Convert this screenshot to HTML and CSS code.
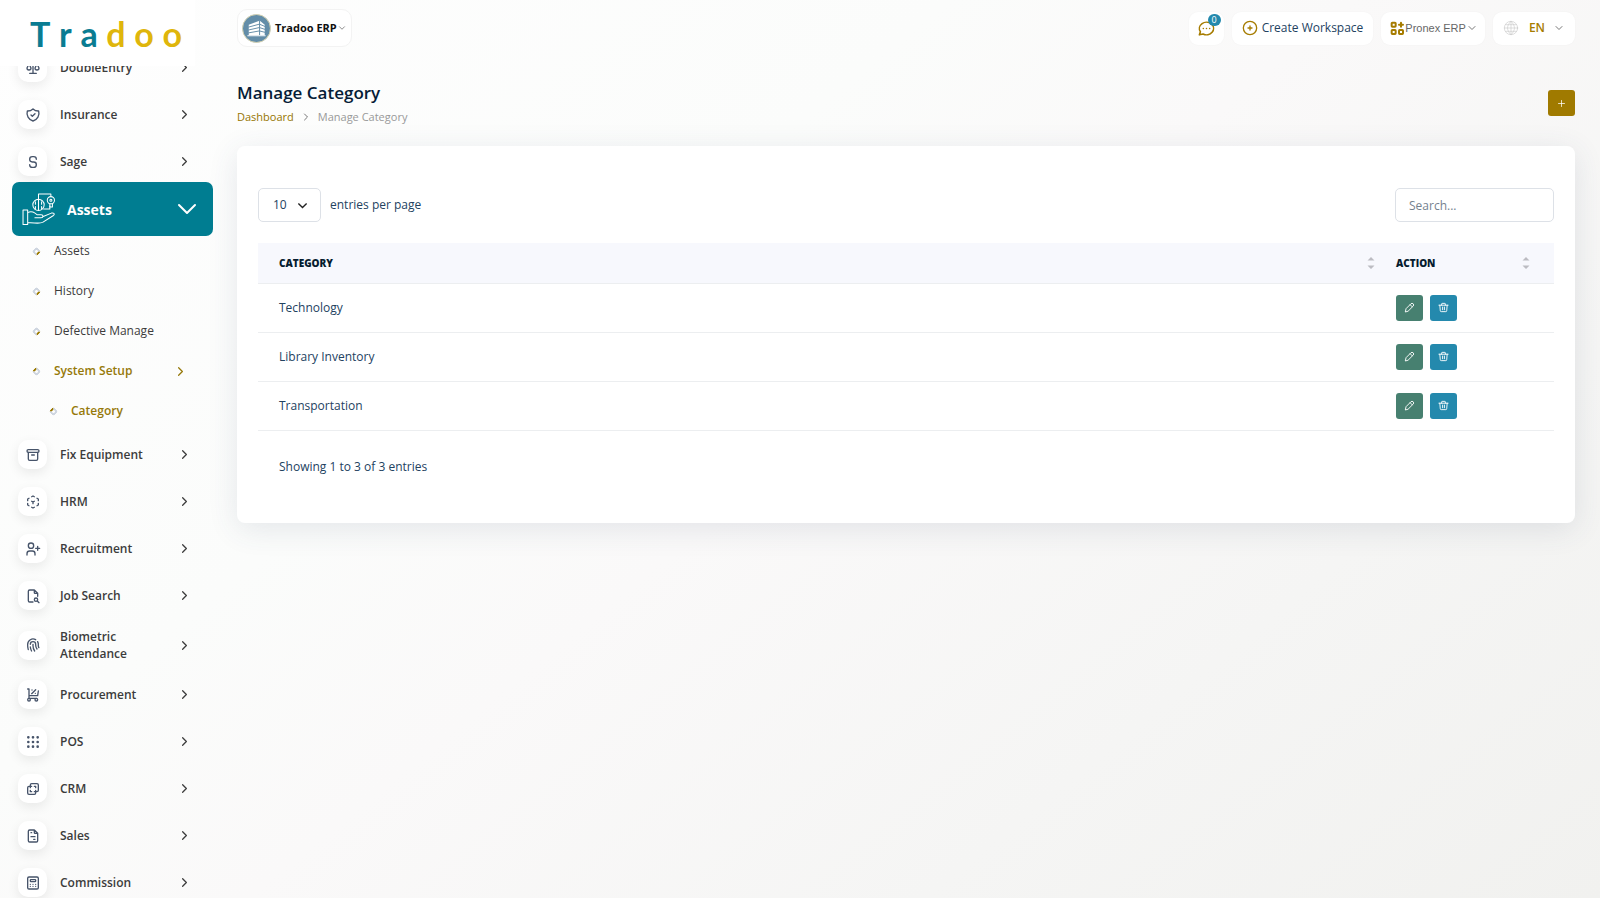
FILE: index.html
```html
<!DOCTYPE html>
<html lang="en">
<head>
<meta charset="utf-8">
<title>Manage Category</title>
<link rel="stylesheet" href="styles.css">
</head>
<body>
<svg class="sprite" aria-hidden="true">
  <symbol id="chev" viewBox="0 0 24 24"><path d="M9 6l6 6l-6 6"/></symbol>
  <symbol id="down" viewBox="0 0 24 24"><path d="M6 9l6 6l6-6"/></symbol>
  <symbol id="pencil" viewBox="0 0 24 24"><path d="M3 21l1.500-6.500L15 4a3.500 3.500 0 0 1 5 5L9.500 19.500zM13.500 6l4.500 4.500"/></symbol>
  <symbol id="trash" viewBox="0 0 24 24"><path d="M2 7h20M4 7l1 12a2 2 0 0 0 2 2h10a2 2 0 0 0 2-2l1-12M8 7V4a1 1 0 0 1 1-1h6a1 1 0 0 1 1 1v3M10 11v6M14 11v6"/></symbol>
  <symbol id="sort" viewBox="0 0 8 12"><path d="M4 0l3.500 3.500h-7zM4 12l3.500-3.500h-7z"/></symbol>
</svg>
<div class="app">
  <aside class="sidebar">
    <a class="logo" href="#" aria-label="Tradoo"><span>T</span><span>r</span><span>a</span><span class="gold">d</span><span class="gold">o</span><span class="gold">o</span></a>
    <nav class="nav">
      <div class="group scrolled">
        <a class="item" href="#"><span class="tile"><svg class="ico" viewBox="0 0 24 24"><path d="M7 20h10M6 6l6-1l6 1M12 3v17M9 12l-3-6l-3 6a3 3 0 0 0 6 0M21 12l-3-6l-3 6a3 3 0 0 0 6 0"/></svg></span><span class="label">DoubleEntry</span><svg class="chev"><use href="#chev"/></svg></a>
        <a class="item" href="#"><span class="tile"><svg class="ico" viewBox="0 0 24 24"><path d="M9 12l2 2l4-4M12 3a12 12 0 0 0 8.500 3a12 12 0 0 1-8.500 15a12 12 0 0 1-8.500-15a12 12 0 0 0 8.500-3"/></svg></span><span class="label">Insurance</span><svg class="chev"><use href="#chev"/></svg></a>
        <a class="item" href="#"><span class="tile"><svg class="ico" viewBox="0 0 24 24"><path d="M17 8a4 4 0 0 0-4-4h-2a4 4 0 0 0 0 8h2a4 4 0 0 1 0 8h-2a4 4 0 0 1-4-4"/></svg></span><span class="label">Sage</span><svg class="chev"><use href="#chev"/></svg></a>
      </div>
      <a class="active" href="#">
        <svg class="hand" viewBox="0 0 32 32"><path d="M1 16.500h4.500v14H1zM5.500 19c4-2 6.500 0 9 2h4c2.500 0 2.500 3 0 3h-6M20 23l8.500-3.500c2.500-.6 3.500 1 2 2.300L20 28.500c-3 1.500-9 .5-14.500 0"/><circle cx="16" cy="11.500" r="5.500"/><path d="M16 6v11M13 8.500v2.500M13 15v-2M19 8.500v2.500M19 15v-2M16 6V1h12v2M21 15.500h6v-3"/><circle cx="28" cy="7" r="3.500"/><circle cx="28" cy="7" r="1"/><path d="M27 10.500v3h2.500v-3"/></svg>
        <span class="label">Assets</span><svg class="open" viewBox="0 0 20 12"><path d="M2 2l8 8l8-8"/></svg>
      </a>
      <div class="sub">
        <a href="#"><i class="dot"></i>Assets</a>
        <a href="#"><i class="dot"></i>History</a>
        <a href="#"><i class="dot"></i>Defective Manage</a>
        <a class="on" href="#"><i class="dot"></i>System Setup<svg class="chev"><use href="#chev"/></svg></a>
        <a class="on deep" href="#"><i class="dot"></i>Category</a>
      </div>
      <div class="group">
        <a class="item" href="#"><span class="tile"><svg class="ico" viewBox="0 0 24 24"><rect x="3" y="4" width="18" height="4" rx="2"/><path d="M5 8v10a2 2 0 0 0 2 2h10a2 2 0 0 0 2-2V8M10 12h4"/></svg></span><span class="label">Fix Equipment</span><svg class="chev"><use href="#chev"/></svg></a>
        <a class="item" href="#"><span class="tile"><svg class="ico" viewBox="0 0 24 24"><path d="M6 17.600l-2-1.100V14M4 10V7.500l2-1.100M10 4.100L12 3l2 1.100M18 6.400l2 1.100V10M20 14v2.500l-2 1.120M14 19.900L12 21l-2-1.100M12 12l2-1.100M12 12v2.500M12 12l-2-1.120"/></svg></span><span class="label">HRM</span><svg class="chev"><use href="#chev"/></svg></a>
        <a class="item" href="#"><span class="tile"><svg class="ico" viewBox="0 0 24 24"><circle cx="9" cy="7" r="4"/><path d="M3 21v-2a4 4 0 0 1 4-4h4a4 4 0 0 1 4 4v2M16 11h6M19 8v6"/></svg></span><span class="label">Recruitment</span><svg class="chev"><use href="#chev"/></svg></a>
        <a class="item" href="#"><span class="tile"><svg class="ico" viewBox="0 0 24 24"><path d="M14 3v4a1 1 0 0 0 1 1h4M12 21H7a2 2 0 0 1-2-2V5a2 2 0 0 1 2-2h7l5 5v4.500M18.500 19.500L21 22"/><circle cx="16.500" cy="17.500" r="2.500"/></svg></span><span class="label">Job Search</span><svg class="chev"><use href="#chev"/></svg></a>
        <a class="item" href="#"><span class="tile"><svg class="ico" viewBox="0 0 24 24"><path d="M18.900 7a8 8 0 0 1 1.100 5v1a6 6 0 0 0 .8 3M8 11a4 4 0 0 1 8 0v1a10 10 0 0 0 2 6M12 11v2a14 14 0 0 0 2.500 8M8 15a18 18 0 0 0 1.800 6M4.900 19a22 22 0 0 1-.9-7v-1a8 8 0 0 1 12-6.950"/></svg></span><span class="label">Biometric Attendance</span><svg class="chev"><use href="#chev"/></svg></a>
        <a class="item" href="#"><span class="tile"><svg class="ico" viewBox="0 0 24 24"><circle cx="6" cy="19" r="2"/><circle cx="17" cy="19" r="2"/><path d="M17 17H6V3H4M20 6l-1 7H6M10 10l6-6M10.500 4.500h.01M15.500 9.500h.01"/></svg></span><span class="label">Procurement</span><svg class="chev"><use href="#chev"/></svg></a>
        <a class="item" href="#"><span class="tile"><svg class="ico fat" viewBox="0 0 24 24"><path d="M5 5h.01M12 5h.01M19 5h.01M5 12h.01M12 12h.01M19 12h.01M5 19h.01M12 19h.01M19 19h.01"/></svg></span><span class="label">POS</span><svg class="chev"><use href="#chev"/></svg></a>
        <a class="item" href="#"><span class="tile"><svg class="ico" viewBox="0 0 24 24"><path d="M16 16v2a2 2 0 0 1-2 2H6a2 2 0 0 1-2-2v-8a2 2 0 0 1 2-2h2V6a2 2 0 0 1 2-2h8a2 2 0 0 1 2 2v8a2 2 0 0 1-2 2h-2M10 8H8v2M8 14v2h2M14 8h2v2M16 14v2h-2"/></svg></span><span class="label">CRM</span><svg class="chev"><use href="#chev"/></svg></a>
        <a class="item" href="#"><span class="tile"><svg class="ico" viewBox="0 0 24 24"><path d="M14 3v4a1 1 0 0 0 1 1h4M17 21H7a2 2 0 0 1-2-2V5a2 2 0 0 1 2-2h7l5 5v11a2 2 0 0 1-2 2zM9 7h1M9 13h6M13 17h2"/></svg></span><span class="label">Sales</span><svg class="chev"><use href="#chev"/></svg></a>
        <a class="item" href="#"><span class="tile"><svg class="ico" viewBox="0 0 24 24"><rect x="4" y="3" width="16" height="18" rx="2"/><rect x="8" y="7" width="8" height="3" rx="1"/><path d="M8 14v.01M12 14v.01M16 14v.01M8 17v.01M12 17v.01M16 17v.01"/></svg></span><span class="label">Commission</span><svg class="chev"><use href="#chev"/></svg></a>
      </div>
    </nav>
  </aside>
  <main class="main">
    <header class="topbar">
      <button class="company" type="button">
        <svg class="avatar" viewBox="0 0 30 30"><circle cx="15" cy="15" r="14.500" fill="#638da8" stroke="#d9d3b0"/><path d="M7 11l11-4v15H7zM18.500 7l5 4v11h-5z" fill="#fff" stroke="none"/><path d="M7 13.500l11-3l6 2.500M7 16.500l11-2.500l6 2M7 19.500l11-2l6 1.500M18.200 7v15" fill="none" stroke="#638da8"/><path d="M6 22.500h18" stroke="#fff"/></svg>
        <span>Tradoo ERP</span><svg class="tiny"><use href="#down"/></svg>
      </button>
      <div class="tools">
        <button class="pill chat" type="button" aria-label="Messages"><svg class="gico" viewBox="0 0 24 24"><path d="M3 20l1.300-3.900C1.970 12.660 2.870 8.220 6.400 5.730c3.540-2.490 8.580-2.250 11.800.56c3.220 2.820 3.600 7.300.9 10.500c-2.700 3.200-7.630 4.080-11.400 2.200zM12 12v.01M8 12v.01M16 12v.01"/></svg><span class="badge">0</span></button>
        <button class="pill create" type="button"><svg class="gico" viewBox="0 0 24 24"><circle cx="12" cy="12" r="10"/><path d="M9 12h6M12 9v6"/></svg>Create Workspace</button>
        <button class="pill erp" type="button"><svg class="gico" viewBox="0 0 24 24"><rect x="4" y="4" width="6" height="6" rx="1"/><rect x="4" y="15" width="6" height="6" rx="1"/><rect x="15" y="15" width="6" height="6" rx="1"/><path d="M15 7h6M18 4v6"/></svg>Pronex ERP<svg class="small"><use href="#down"/></svg></button>
        <button class="pill lang" type="button"><svg class="globe" viewBox="0 0 24 24"><circle cx="12" cy="12" r="10"/><path d="M2 12h20M4 7h16M4 17h16M12 2v20M12 2c-7 6-7 14 0 20M12 2c7 6 7 14 0 20"/></svg><span>EN</span><svg class="small"><use href="#down"/></svg></button>
      </div>
    </header>
    <div class="heading">
      <div>
        <h1>Manage Category</h1>
        <div class="crumbs"><a href="#">Dashboard</a><svg class="small"><use href="#chev"/></svg><span>Manage Category</span></div>
      </div>
      <button class="add" type="button" aria-label="Create"><svg viewBox="0 0 24 24"><path d="M12 4v16M4 12h16"/></svg></button>
    </div>
    <section class="card">
      <div class="controls">
        <label class="per"><select><option>10</option><option>25</option></select>entries per page</label>
        <input class="search" type="search" placeholder="Search..." aria-label="Search">
      </div>
      <table>
        <thead><tr><th><div>Category<svg class="sort"><use href="#sort"/></svg></div></th><th class="act"><div>Action<svg class="sort"><use href="#sort"/></svg></div></th></tr></thead>
        <tbody>
          <tr><td>Technology</td><td><div class="btns"><button class="edit" type="button" aria-label="Edit"><svg><use href="#pencil"/></svg></button><button class="del" type="button" aria-label="Delete"><svg><use href="#trash"/></svg></button></div></td></tr>
          <tr><td>Library Inventory</td><td><div class="btns"><button class="edit" type="button" aria-label="Edit"><svg><use href="#pencil"/></svg></button><button class="del" type="button" aria-label="Delete"><svg><use href="#trash"/></svg></button></div></td></tr>
          <tr><td>Transportation</td><td><div class="btns"><button class="edit" type="button" aria-label="Edit"><svg><use href="#pencil"/></svg></button><button class="del" type="button" aria-label="Delete"><svg><use href="#trash"/></svg></button></div></td></tr>
        </tbody>
      </table>
      <p class="info">Showing 1 to 3 of 3 entries</p>
    </section>
  </main>
</div>
</body>
</html>
```
FILE: styles.css
```css
* { box-sizing: border-box; }
body {
  margin: 0;
  font: 12px/18px "Open Sans", sans-serif;
  color: #23425f;
  background: linear-gradient(141deg, #fefefe 0%, #fbfcfb 35%, #faf9f9 50%, #f5f5f4 75%, #f1f1ef 100%) fixed;
}
a { color: inherit; text-decoration: none; }
button, input, select { font: inherit; color: inherit; margin: 0; }
button { border: 0; cursor: pointer; }
svg { flex: none; fill: none; stroke: currentColor; stroke-width: 2; stroke-linecap: round; stroke-linejoin: round; }
.sprite { position: absolute; width: 0; height: 0; }
.app { display: flex; height: 100vh; overflow: hidden; }

.sidebar { width: 237px; flex: none; display: flex; flex-direction: column; }
.logo {
  flex: none; width: 195px; height: 66px; padding: 2px 13px 0 30px;
  display: flex; align-items: center; justify-content: space-between;
  background: #fff; color: #0a7c92; font: 700 34px/40px Lato, sans-serif;
}
.gold { color: #dfb60c; }
.nav { flex: 1; min-height: 0; overflow: hidden; color: #3c3c3c; font-weight: 600; }
.group { display: flex; flex-direction: column; gap: 18px; padding: 0 45px 0 18px; }
.scrolled { margin-top: -13px; }
.item { display: flex; align-items: center; }
.tile {
  width: 29px; height: 29px; margin-right: 13px; flex: none; border-radius: 10px;
  display: grid; place-items: center; background: #fff; color: #47546a;
  box-shadow: 0 4px 12px rgba(0, 0, 0, .08);
}
.ico { width: 16px; height: 16px; }
.fat { stroke-width: 4; }
.label { flex: 1; padding-right: 30px; line-height: 17px; }
.chev { width: 15px; height: 15px; }
.active {
  display: flex; align-items: center; height: 54px; margin: 6px 24px 0 12px; padding: 0 16px 0 10px;
  border-radius: 7px; background: #007d91; color: #fff; font-size: 14px;
}
.hand { width: 33px; height: 33px; margin-right: 12px; stroke-width: 1; }
.active .label { padding: 0; font-weight: 700; }
.open { width: 20px; height: 12px; }
.sub { display: flex; flex-direction: column; gap: 20px; padding: 5px 49px 19px 33px; font-weight: 500; line-height: 20px; }
.sub a { display: flex; align-items: center; }
.sub .chev { margin-left: auto; }
.sub .on { color: #96790a; font-weight: 600; }
.sub .deep { padding-left: 17px; }
.dot { width: 7px; height: 7px; margin-right: 14px; border: 2px solid #cfd6e0; border-bottom-color: #9c7a00; border-radius: 50%; transform: rotate(-45deg); }
.on .dot { transform: rotate(135deg); }

.main { flex: 1; min-width: 0; padding: 9px 25px 0 0; }
.topbar { display: flex; justify-content: space-between; align-items: center; }
.company {
  display: flex; align-items: center; height: 38px; padding: 0 4px; border: 1px solid #f3f3f3;
  border-radius: 10px; background: #fff; color: #111; font-size: 11px; font-weight: 700;
}
.avatar { width: 29px; height: 29px; margin-right: 4px; stroke-width: 1; }
.tiny { width: 10px; height: 10px; color: #777; }
.tools { display: flex; gap: 8px; }
.pill { position: relative; display: flex; align-items: center; height: 33px; border-radius: 9px; background: #fff; box-shadow: 0 0 2px rgba(0, 0, 0, .04); }
.gico { width: 16px; height: 16px; color: #a67c00; }
.chat { padding: 0 8px; }
.chat .gico { width: 19px; height: 19px; }
.badge { position: absolute; left: 19px; top: 2px; width: 13px; height: 12px; border-radius: 6px; background: #2489ad; color: #fff; font-size: 9px; line-height: 12px; }
.create { padding: 0 10px; gap: 4px; font-weight: 500; }
.erp { padding: 0 7px 0 8px; color: #666; font: 11px/16px "Liberation Sans", sans-serif; }
.erp .gico { stroke-width: 3; }
.small { width: 12px; height: 12px; color: #777; }
.lang { padding: 0 10px; gap: 10px; color: #a67c00; font-weight: 600; }
.lang .small { margin-left: -2px; }
.globe { width: 16px; height: 16px; color: #ccc; stroke-width: 1; }

.heading { display: flex; align-items: center; justify-content: space-between; margin: 33px 0 20px; }
h1 { margin: 0; color: #061c37; font-size: 17px; line-height: 26px; font-weight: 600; }
.crumbs { display: flex; align-items: center; gap: 6px; margin-top: 2px; font-size: 11px; line-height: 18px; color: #999; }
.crumbs a { color: #967500; }
.add { width: 27px; height: 26px; padding: 0; display: grid; place-items: center; border-radius: 3px; background: #a07a00; color: #fff; }
.add svg { width: 9px; height: 9px; }

.card { padding: 42px 21px 47px; border-radius: 8px; background: #fff; box-shadow: 0 6px 30px rgba(60, 75, 105, .12); }
.controls { display: flex; justify-content: space-between; margin-bottom: 21px; }
.per { display: flex; align-items: center; gap: 9px; }
.per select {
  width: 63px; height: 34px; padding: 0 14px; border: 1px solid #dde1e7; border-radius: 5px; appearance: none;
  background: url("data:image/svg+xml,%3Csvg xmlns='http://www.w3.org/2000/svg' viewBox='0 0 16 16'%3E%3Cpath d='M2 5l6 6 6-6' fill='none' stroke='%23222' stroke-width='2'/%3E%3C/svg%3E") right 12px center / 11px no-repeat #fff;
}
.search { width: 159px; height: 34px; padding: 0 13px; border: 1px solid #dde1e7; border-radius: 5px; background: #fff; }
.search::placeholder { color: #75828f; }
table { width: 100%; border-collapse: collapse; }
th { height: 40px; padding: 0 0 0 21px; background: #f7f8fd; color: #061c2f; font-size: 10px; font-weight: 800; text-transform: uppercase; border-bottom: 1px solid #eceef0; }
th div { display: flex; align-items: center; justify-content: space-between; }
.sort { width: 8px; height: 12px; fill: #bcbcc2; stroke: none; }
.act { width: 179px; padding-right: 24px; }
td { height: 49px; padding: 0 0 0 21px; border-bottom: 1px solid #eceef0; }
.btns { display: flex; gap: 7px; }
.btns button { width: 27px; height: 26px; padding: 0; display: grid; place-items: center; border-radius: 3px; color: #fff; }
.btns svg { width: 11px; height: 11px; }
.edit { background: #478070; }
.del { background: #2489ad; }
.info { margin: 27px 21px 0; }
```
